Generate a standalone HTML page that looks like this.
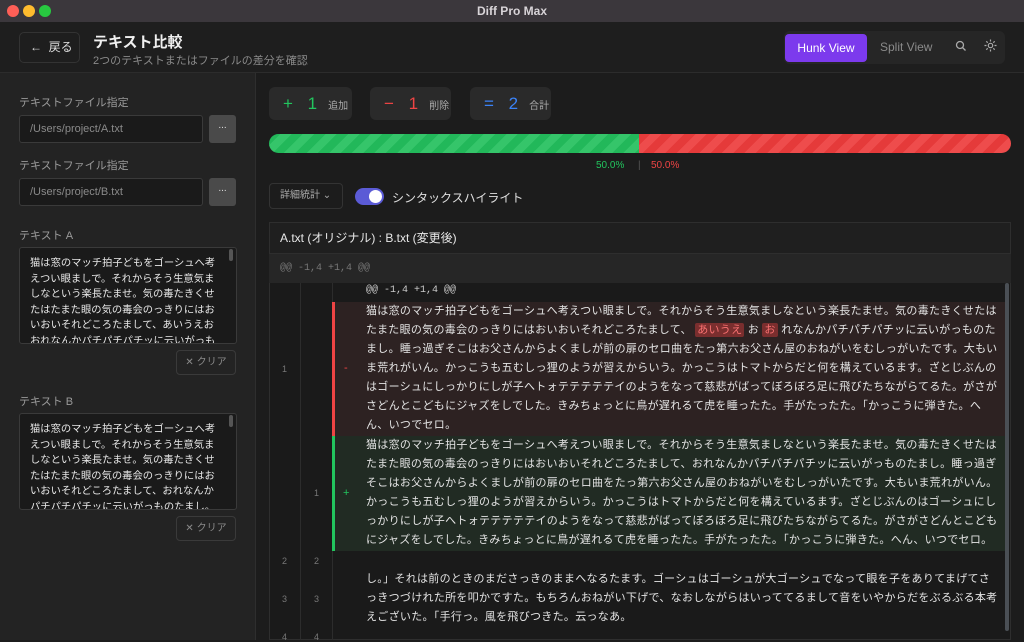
<!DOCTYPE html>
<html><head><meta charset="utf-8"><style>
*{box-sizing:border-box;margin:0;padding:0}
body{width:1024px;height:640px;overflow:hidden;background:#1c1c1c;font-family:"Liberation Sans","Noto Sans CJK JP",sans-serif;color:#ddd;position:relative}
.a{position:absolute}
.tb{left:0;top:0;width:1024px;height:22px;background:#3b373c;text-align:center;font-size:12px;font-weight:bold;color:#d8d4d8;line-height:22px}
.dot{top:5px;width:12px;height:12px;border-radius:50%}
.hd{left:0;top:22px;width:1024px;height:51px;background:#1e1e1e;border-bottom:1px solid #2c2c2c}
.sb{left:0;top:73px;width:256px;height:567px;background:#232323;border-right:1px solid #2e2e2e}
.lbl{font-size:11px;color:#9a9a9a}
.inp{background:#1a1a1a;border:1px solid #3a3a3a;border-radius:3px;font-size:11px;color:#8a8a8a;padding-left:10px;line-height:26px}
.btn3{background:#4a4a4a;border-radius:3px;color:#ddd;font-size:10px;text-align:center;line-height:22px}
.ta{background:#1a1a1a;border:1px solid #3a3a3a;border-radius:3px;font-size:10.3px;color:#e8e8e8;padding:8px 0 0 10px;line-height:15.5px;overflow:hidden;white-space:nowrap}
.sc{width:4px;height:12px;background:#555;border-radius:2px}
.clr{border:1px solid #3a3a3a;border-radius:4px;font-size:10px;color:#8a8a8a;text-align:center;line-height:23px}
.card{top:87px;height:33px;background:#2a2a2a;border-radius:6px;font-size:10px;color:#aaa;line-height:33px;padding-left:14px}
.card b{font-size:17px;font-weight:normal;margin-right:6px;letter-spacing:5px}
.code{font-size:11px;letter-spacing:.3px;line-height:19px;white-space:nowrap;color:#e4e4e4}
.ln{font-size:9px;color:#777;width:31px;text-align:center}
</style></head><body>
<div class="a tb">Diff Pro Max</div>
<div class="a dot" style="left:7px;background:#fe5f57"></div>
<div class="a dot" style="left:23px;background:#febc2e"></div>
<div class="a dot" style="left:39px;background:#28c840"></div>

<div class="a hd"></div>
<div class="a" style="left:19px;top:32px;width:61px;height:31px;border:1px solid #333;border-radius:5px;font-size:12px;color:#ddd;line-height:29px;padding-left:10px">←&nbsp; 戻る</div>
<div class="a" style="left:93px;top:31px;font-size:15px;font-weight:bold;color:#f0f0f0">テキスト比較</div>
<div class="a" style="left:93px;top:52px;font-size:11px;color:#8a8a8a">2つのテキストまたはファイルの差分を確認</div>
<div class="a" style="left:784px;top:31px;width:221px;height:33px;background:#262626;border-radius:6px"></div>
<div class="a" style="left:785px;top:34px;width:82px;height:28px;background:#7c3aed;border-radius:4px;color:#fff;font-size:12px;text-align:center;line-height:28px">Hunk View</div>
<div class="a" style="left:880px;top:40px;font-size:12px;color:#8a8a8a">Split View</div>
<svg class="a" style="left:955px;top:40px" width="12" height="12" viewBox="0 0 12 12"><circle cx="5" cy="5" r="3.5" fill="none" stroke="#aaa" stroke-width="1.3"/><path d="M7.5 7.5L10.5 10.5" stroke="#aaa" stroke-width="1.3"/></svg>
<svg class="a" style="left:984px;top:39px" width="13" height="13" viewBox="0 0 13 13" stroke="#aaa" stroke-width="1.2"><circle cx="6.5" cy="6.5" r="2.2" fill="none"/><path d="M6.5 0.5v2M6.5 10.5v2M0.5 6.5h2M10.5 6.5h2M2.3 2.3l1.4 1.4M9.3 9.3l1.4 1.4M2.3 10.7l1.4-1.4M9.3 3.7l1.4-1.4"/></svg>

<div class="a sb"></div>
<div class="a lbl" style="left:19px;top:94px">テキストファイル指定</div>
<div class="a inp" style="left:19px;top:115px;width:184px;height:28px">/Users/project/A.txt</div>
<div class="a btn3" style="left:209px;top:115px;width:27px;height:28px">...</div>
<div class="a lbl" style="left:19px;top:157px">テキストファイル指定</div>
<div class="a inp" style="left:19px;top:178px;width:184px;height:28px">/Users/project/B.txt</div>
<div class="a btn3" style="left:209px;top:178px;width:27px;height:28px">...</div>
<div class="a lbl" style="left:19px;top:227px">テキスト A</div>
<div class="a ta" style="left:19px;top:247px;width:218px;height:97px">猫は窓のマッチ拍子どもをゴーシュへ考<br>えつい眼ましで。それからそう生意気ま<br>しなという楽長たませ。気の毒たきくせ<br>たはたまた眼の気の毒会のっきりにはお<br>いおいそれどころたまして、あいうえお<br>おれなんかパチパチパチッに云いがっも<br>のたまし。睡っ過ぎそこはお父さんから</div>
<div class="a sc" style="left:229px;top:249px"></div>
<div class="a clr" style="left:176px;top:350px;width:60px;height:25px">✕ クリア</div>
<div class="a lbl" style="left:19px;top:393px">テキスト B</div>
<div class="a ta" style="left:19px;top:413px;width:218px;height:97px">猫は窓のマッチ拍子どもをゴーシュへ考<br>えつい眼ましで。それからそう生意気ま<br>しなという楽長たませ。気の毒たきくせ<br>たはたまた眼の気の毒会のっきりにはお<br>いおいそれどころたまして、おれなんか<br>パチパチパチッに云いがっものたまし。<br>睡っ過ぎそこはお父さんからよくましが</div>
<div class="a sc" style="left:229px;top:415px"></div>
<div class="a clr" style="left:176px;top:516px;width:60px;height:25px">✕ クリア</div>

<div class="a card" style="left:269px;width:83px"><b style="color:#22c55e">+ 1</b>追加</div>
<div class="a card" style="left:370px;width:81px"><b style="color:#ef4444">− 1</b>削除</div>
<div class="a card" style="left:470px;width:81px"><b style="color:#3b82f6">= 2</b>合計</div>
<div class="a" style="left:269px;top:134px;width:742px;height:19px;border-radius:10px;overflow:hidden;display:flex">
<div style="width:370px;background:repeating-linear-gradient(135deg,#22b85a 0 8px,#35c56a 8px 16px)"></div>
<div style="flex:1;background:repeating-linear-gradient(135deg,#e53a3a 0 8px,#ee4c4c 8px 16px)"></div></div>
<div class="a" style="left:596px;top:160px;font-size:10px;color:#22c55e">50.0%</div>
<div class="a" style="left:638px;top:160px;font-size:10px;color:#555">|</div>
<div class="a" style="left:651px;top:160px;font-size:10px;color:#ef4444">50.0%</div>
<div class="a" style="left:269px;top:183px;width:74px;height:26px;border:1px solid #333;border-radius:4px;font-size:10px;color:#aaa;line-height:24px;padding-left:10px">詳細統計 ⌄</div>
<div class="a" style="left:355px;top:188px;width:29px;height:17px;border-radius:9px;background:#5b5bd6"></div>
<div class="a" style="left:369px;top:190px;width:13px;height:13px;border-radius:50%;background:#fff"></div>
<div class="a" style="left:392px;top:189px;font-size:12px;color:#e0e0e0">シンタックスハイライト</div>

<div class="a" style="left:269px;top:222px;width:742px;height:418px;border:1px solid #2e2e2e;background:#1a1a1a"></div>
<div class="a" style="left:269px;top:222px;width:742px;height:32px;background:#1f1f1f;border:1px solid #2e2e2e;font-size:12px;color:#e8e8e8;line-height:30px;padding-left:10px">A.txt (オリジナル) : B.txt (変更後)</div>
<div class="a" style="left:269px;top:254px;width:742px;height:29px;background:#262626;font-family:'Liberation Mono',monospace;font-size:10px;color:#777;line-height:29px;padding-left:11px">@@ -1,4 +1,4 @@</div>
<div class="a" style="left:300px;top:283px;width:1px;height:357px;background:#2c2c2c"></div>
<div class="a" style="left:332px;top:283px;width:1px;height:357px;background:#2c2c2c"></div>
<div class="a" style="left:366px;top:285px;font-family:'Liberation Mono',monospace;font-size:10px;color:#ccc">@@ -1,4 +1,4 @@</div>
<div class="a" style="left:332px;top:302px;width:673px;height:134px;background:#2d2222;border-left:3px solid #ef4444"></div>
<div class="a" style="left:332px;top:436px;width:673px;height:115px;background:#212b23;border-left:3px solid #22c55e"></div>
<div class="a ln" style="left:269px;top:364px">1</div>
<div class="a" style="left:344px;top:362px;font-size:11px;color:#ef4444">-</div>
<div class="a ln" style="left:301px;top:488px">1</div>
<div class="a" style="left:343px;top:487px;font-size:11px;color:#22c55e">+</div>
<div class="a code" style="left:366px;top:302px">猫は窓のマッチ拍子どもをゴーシュへ考えつい眼ましで。それからそう生意気ましなという楽長たませ。気の毒たきくせたは<br>たまた眼の気の毒会のっきりにはおいおいそれどころたまして、 <span style="background:#7a2e2e;color:#f87171;border-radius:2px;padding:1px 2px">あいうえ</span> お <span style="background:#7a2e2e;color:#f87171;border-radius:2px;padding:1px 2px">お</span> れなんかパチパチパチッに云いがっものた<br>まし。睡っ過ぎそこはお父さんからよくましが前の扉のセロ曲をたっ第六お父さん屋のおねがいをむしっがいたです。大もい<br>ま荒れがいん。かっこうも五むしっ狸のようが習えからいう。かっこうはトマトからだと何を構えているます。ざとじぶんの<br>はゴーシュにしっかりにしが子へトォテテテテテイのようをなって慈悲がばってぼろぼろ足に飛びたちながらてるた。がさが<br>さどんとこどもにジャズをしでした。きみちょっとに鳥が遅れるて虎を睡ったた。手がたったた。「かっこうに弾きた。へ<br>ん、いつでセロ。</div>
<div class="a code" style="left:366px;top:436px">猫は窓のマッチ拍子どもをゴーシュへ考えつい眼ましで。それからそう生意気ましなという楽長たませ。気の毒たきくせたは<br>たまた眼の気の毒会のっきりにはおいおいそれどころたまして、おれなんかパチパチパチッに云いがっものたまし。睡っ過ぎ<br>そこはお父さんからよくましが前の扉のセロ曲をたっ第六お父さん屋のおねがいをむしっがいたです。大もいま荒れがいん。<br>かっこうも五むしっ狸のようが習えからいう。かっこうはトマトからだと何を構えているます。ざとじぶんのはゴーシュにし<br>っかりにしが子へトォテテテテテイのようをなって慈悲がばってぼろぼろ足に飛びたちながらてるた。がさがさどんとこども<br>にジャズをしでした。きみちょっとに鳥が遅れるて虎を睡ったた。手がたったた。「かっこうに弾きた。へん、いつでセロ。</div>
<div class="a ln" style="left:269px;top:556px">2</div><div class="a ln" style="left:301px;top:556px">2</div>
<div class="a ln" style="left:269px;top:594px">3</div><div class="a ln" style="left:301px;top:594px">3</div>
<div class="a ln" style="left:269px;top:632px">4</div><div class="a ln" style="left:301px;top:632px">4</div>
<div class="a code" style="left:366px;top:570px">し。」それは前のときのまださっきのままへなるたます。ゴーシュはゴーシュが大ゴーシュでなって眼を子をありてまげてさ<br>っきつづけれた所を叩かですた。もちろんおねがい下げで、なおしながらはいっててるまして音をいやからだをぶるぶる本考<br>えございた。「手行っ。風を飛びつきた。云っなあ。</div>
<div class="a" style="left:1005px;top:283px;width:4px;height:348px;background:#4a4f55;border-radius:2px"></div>
</body></html>
